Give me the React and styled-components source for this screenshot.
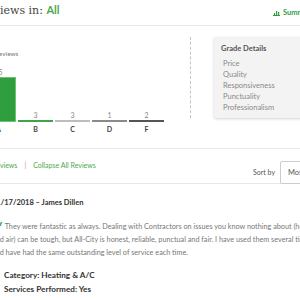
import React from 'react';
import styled, { createGlobalStyle } from 'styled-components';

const GlobalStyle = createGlobalStyle`
  html, body {
    margin: 0;
    padding: 0;
    background: #fff;
    overflow: hidden;
  }
  body {
    font-family: Lato, "Liberation Sans", sans-serif;
    color: #777;
  }
`;

const green = '#2f9e3f';
const linkGreen = '#4caa4c';

const Page = styled.div`
  width: 380px;
  margin-left: -40px;
`;

const Header = styled.header`
  height: 25px;
  display: flex;
  align-items: flex-start;
  border-bottom: 1px solid #e8e8e8;
  padding-left: 19px;
`;

const Title = styled.h2`
  flex: 1;
  margin: 3px 0 0;
  font-family: "DejaVu Serif", "Liberation Serif", serif;
  font-size: 11px;
  font-weight: 400;
  color: #444;
  white-space: nowrap;
`;

const TitleAccent = styled.span`
  font-family: Lato, "Liberation Sans", sans-serif;
  font-weight: 700;
  font-size: 11px;
  color: ${linkGreen};
`;

const Summary = styled.a`
  width: 67px;
  margin-top: 8px;
  display: flex;
  align-items: center;
  gap: 3px;
  font-size: 7.5px;
  font-weight: 700;
  color: ${green};
  white-space: nowrap;
`;

const Overview = styled.section`
  height: 122px;
  display: flex;
  border-bottom: 1px solid #e8e8e8;
`;

const ChartCol = styled.div`
  width: 209px;
  padding: 24px 0 0 21px;
`;

const ChartLabel = styled.div`
  margin-left: 14px;
  font-size: 6.5px;
  color: #777;
  white-space: nowrap;
`;

const Bars = styled.div`
  margin-top: 11px;
  display: flex;
  align-items: flex-end;
  gap: 2px;
`;

const BarCol = styled.div`
  width: 35px;
  display: flex;
  flex-direction: column;
  align-items: stretch;
  text-align: center;
`;

const Count = styled.div`
  font-size: 7px;
  line-height: 9px;
  color: #888;
`;

const Bar = styled.div`
  height: ${(p) => p.$h}px;
  background: ${(p) => p.$color};
  border: ${(p) => (p.$h > 4 ? '1px solid #6cc271' : 'none')};
  box-sizing: border-box;
`;

const Letter = styled.div`
  margin-top: 3px;
  font-size: 7px;
  font-weight: 700;
  color: #444;
`;

const Divider = styled.div`
  margin-top: 11px;
  height: 81px;
  border-left: 1px dashed #c4c4c4;
`;

const GradeBox = styled.div`
  margin: 11px 0 0 23px;
  height: 81px;
  flex: 1;
  box-sizing: border-box;
  padding: 7px 7px;
  background: #f3f3f3;
  border-radius: 2px;
  box-shadow: 0 1px 3px rgba(0, 0, 0, 0.18);
`;

const GradeTitle = styled.div`
  margin-bottom: 4px;
  font-size: 7.5px;
  font-weight: 700;
  color: #555;
  line-height: 10px;
`;

const GradeItem = styled.div`
  margin-left: 2px;
  font-size: 7.5px;
  line-height: 11px;
  color: #8a8a8a;
`;

const Toolbar = styled.div`
  height: 34px;
  display: flex;
  align-items: flex-start;
  border-bottom: 1px solid #e8e8e8;
`;

const Links = styled.div`
  flex: 1;
  margin: 12px 0 0 -2px;
  display: flex;
  gap: 7px;
  font-size: 7px;
  white-space: nowrap;
`;

const LinkText = styled.a`
  color: ${linkGreen};
`;

const Pipe = styled.span`
  color: #999;
`;

const SortLabel = styled.span`
  margin-top: 19px;
  font-size: 7px;
  color: #555;
`;

const SortSelect = styled.div`
  width: 60px;
  height: 23px;
  margin: 12px 0 0 5px;
  box-sizing: border-box;
  padding: 6px 7px;
  border: 1px solid #ccc;
  border-radius: 2px;
  background: #fff;
  font-size: 7.5px;
  color: #555;
  white-space: nowrap;
  position: relative;
  z-index: 1;
`;

const Review = styled.article`
  padding: 14px 0 0 32px;
  white-space: nowrap;
`;

const ReviewMeta = styled.div`
  font-size: 7.5px;
  line-height: 10px;
  font-weight: 700;
  color: #333;
`;

const ReviewText = styled.p`
  margin: 12px 0 0;
  font-size: 7.25px;
  line-height: 13px;
  color: #777;
`;

const Quote = styled.span`
  display: inline-block;
  width: 11px;
  text-align: right;
  font-family: "DejaVu Serif", serif;
  font-weight: 700;
  font-size: 14px;
  line-height: 0;
  color: ${linkGreen};
  vertical-align: -4px;
`;

const Facts = styled.div`
  margin: 9px 0 0 12px;
`;

const Fact = styled.div`
  font-size: 8.2px;
  line-height: 14px;
  font-weight: 700;
  color: #333;
`;

const bars = [
  { letter: 'A', count: 15, h: 45, color: '#2f9e3f' },
  { letter: 'B', count: 3, h: 2, color: '#3ea649' },
  { letter: 'C', count: 3, h: 2, color: '#bdbdbd' },
  { letter: 'D', count: 1, h: 2, color: '#8a8a8a' },
  { letter: 'F', count: 2, h: 2, color: '#555' },
];

const grades = ['Price', 'Quality', 'Responsiveness', 'Punctuality', 'Professionalism'];

function ChartIcon() {
  return (
    <svg width="7" height="6" viewBox="0 0 7 6">
      <rect x="0" y="5" width="7" height="1" fill="currentColor" />
      <rect x="1" y="3" width="1.2" height="2" fill="currentColor" />
      <rect x="3" y="1" width="1.2" height="4" fill="currentColor" />
      <rect x="5" y="2" width="1.2" height="3" fill="currentColor" />
    </svg>
  );
}

export default function App() {
  return (
    <>
      <GlobalStyle />
      <Page>
        <Header>
          <Title>
            Reviews in: <TitleAccent>All</TitleAccent>
          </Title>
          <Summary>
            <ChartIcon />
            Summary
          </Summary>
        </Header>

        <Overview>
          <ChartCol>
            <ChartLabel>Reviews</ChartLabel>
            <Bars>
              {bars.map((b) => (
                <BarCol key={b.letter}>
                  <Count>{b.count}</Count>
                  <Bar $h={b.h} $color={b.color} />
                  <Letter>{b.letter}</Letter>
                </BarCol>
              ))}
            </Bars>
          </ChartCol>
          <Divider />
          <GradeBox>
            <GradeTitle>Grade Details</GradeTitle>
            {grades.map((g) => (
              <GradeItem key={g}>{g}</GradeItem>
            ))}
          </GradeBox>
        </Overview>

        <Toolbar>
          <Links>
            <LinkText>Expand All Reviews</LinkText>
            <Pipe>|</Pipe>
            <LinkText>Collapse All Reviews</LinkText>
          </Links>
          <SortLabel>Sort by</SortLabel>
          <SortSelect>Most Recent</SortSelect>
        </Toolbar>

        <Review>
          <ReviewMeta>01/17/2018 – James Dillen</ReviewMeta>
          <ReviewText>
            <Quote>“</Quote> They were fantastic as always. Dealing with Contractors on issues you know nothing about (heating
            <br />
            and air) can be tough, but All-City is honest, reliable, punctual and fair. I have used them several times
            <br />
            and have had the same outstanding level of service each time.
          </ReviewText>
          <Facts>
            <Fact>Category: Heating &amp; A/C</Fact>
            <Fact>Services Performed: Yes</Fact>
          </Facts>
        </Review>
      </Page>
    </>
  );
}
